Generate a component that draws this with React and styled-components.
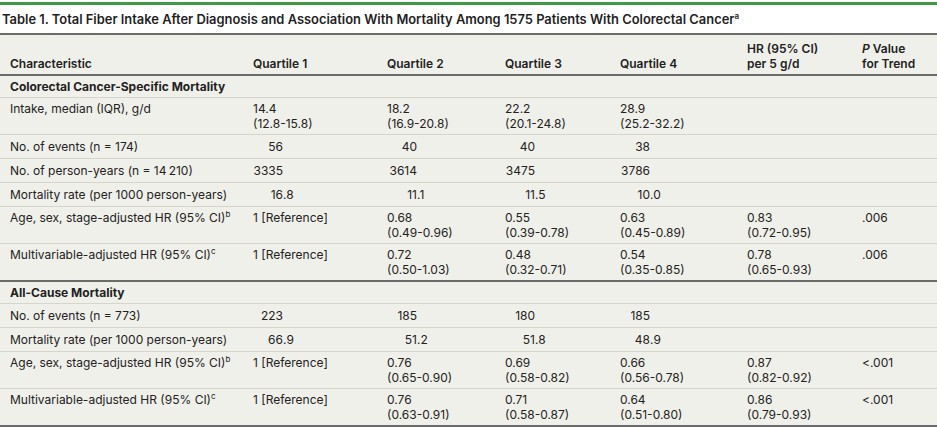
import React from "react";
import styled, { createGlobalStyle } from "styled-components";

const GlobalStyle = createGlobalStyle`
  body {
    margin: 0;
    background: #ffffff;
    font-family: Inter, "Open Sans", "Liberation Sans", sans-serif;
    color: #222222;
  }
`;

const Wrapper = styled.div`
  width: 937px;
  border-top: 3px solid #3f9a45;
  margin-top: 2px;
`;

const Caption = styled.div`
  font-size: 12.9px;
  font-weight: 600;
  line-height: 16px;
  padding: 7px 2px 5px;
  border-bottom: 2px solid #6b6b6b;
  color: #1f1f1f;
  white-space: nowrap;
`;

const Table = styled.table`
  width: 100%;
  border-collapse: collapse;
  table-layout: fixed;
  background: #f0f0ea;
  font-size: 12px;
  line-height: 15px;
`;

const Th = styled.th`
  text-align: left;
  vertical-align: bottom;
  font-weight: 600;
  padding: 6px 10px 3px;
  border-bottom: 2px solid #6b6b6b;
`;

const Td = styled.td`
  vertical-align: top;
  padding: ${(p) => (p.$single ? "4px 10px 4px" : "3px 10px 3px")};
  font-weight: ${(p) => (p.$section ? 700 : 400)};
  border-bottom: ${(p) => (p.$last ? "2px solid #6b6b6b" : "1px solid #d5d5cc")};
  white-space: nowrap;
`;

const IntPart = styled.span`
  display: inline-block;
  width: 30px;
  text-align: right;
`;

const Sup = styled.sup`
  font-size: 8px;
  line-height: 0;
  vertical-align: 5px;
`;

const Line = styled.div``;

function Aligned({ value }) {
  const [int, frac] = value.split(".");
  return (
    <>
      <IntPart>{int}</IntPart>
      {frac !== undefined ? "." + frac : ""}
    </>
  );
}

function Cell({ v, last, single }) {
  if (!v) return <Td $last={last} $single={single} />;
  if (Array.isArray(v)) {
    return (
      <Td $last={last} $single={single}>
        {v.map((l, i) => (
          <Line key={i}>{l}</Line>
        ))}
      </Td>
    );
  }
  if (v.startsWith("1 [")) {
    return (
      <Td $last={last} $single={single}>
        {v}
      </Td>
    );
  }
  return (
    <Td $last={last} $single={single}>
      <Aligned value={v} />
    </Td>
  );
}

const sections = [
  {
    title: "Colorectal Cancer-Specific Mortality",
    rows: [
      {
        label: "Intake, median (IQR), g/d",
        cells: [
          ["14.4", "(12.8-15.8)"],
          ["18.2", "(16.9-20.8)"],
          ["22.2", "(20.1-24.8)"],
          ["28.9", "(25.2-32.2)"],
          null,
          null,
        ],
      },
      { label: "No. of events (n = 174)", cells: ["56", "40", "40", "38", null, null] },
      {
        label: "No. of person-years (n = 14\u202f210)",
        cells: ["3335", "3614", "3475", "3786", null, null],
      },
      {
        label: "Mortality rate (per 1000 person-years)",
        cells: ["16.8", "11.1", "11.5", "10.0", null, null],
      },
      {
        label: "Age, sex, stage-adjusted HR (95% CI)",
        sup: "b",
        cells: [
          "1 [Reference]",
          ["0.68", "(0.49-0.96)"],
          ["0.55", "(0.39-0.78)"],
          ["0.63", "(0.45-0.89)"],
          ["0.83", "(0.72-0.95)"],
          [".006"],
        ],
      },
      {
        label: "Multivariable-adjusted HR (95% CI)",
        sup: "c",
        cells: [
          "1 [Reference]",
          ["0.72", "(0.50-1.03)"],
          ["0.48", "(0.32-0.71)"],
          ["0.54", "(0.35-0.85)"],
          ["0.78", "(0.65-0.93)"],
          [".006"],
        ],
      },
    ],
  },
  {
    title: "All-Cause Mortality",
    rows: [
      { label: "No. of events (n = 773)", cells: ["223", "185", "180", "185", null, null] },
      {
        label: "Mortality rate (per 1000 person-years)",
        cells: ["66.9", "51.2", "51.8", "48.9", null, null],
      },
      {
        label: "Age, sex, stage-adjusted HR (95% CI)",
        sup: "b",
        cells: [
          "1 [Reference]",
          ["0.76", "(0.65-0.90)"],
          ["0.69", "(0.58-0.82)"],
          ["0.66", "(0.56-0.78)"],
          ["0.87", "(0.82-0.92)"],
          ["<.001"],
        ],
      },
      {
        label: "Multivariable-adjusted HR (95% CI)",
        sup: "c",
        cells: [
          "1 [Reference]",
          ["0.76", "(0.63-0.91)"],
          ["0.71", "(0.58-0.87)"],
          ["0.64", "(0.51-0.80)"],
          ["0.86", "(0.79-0.93)"],
          ["<.001"],
        ],
      },
    ],
  },
];

export default function App() {
  return (
    <Wrapper>
      <GlobalStyle />
      <Caption>
        Table 1. Total Fiber Intake After Diagnosis and Association With Mortality Among 1575
        Patients With Colorectal Cancer<Sup>a</Sup>
      </Caption>
      <Table>
        <colgroup>
          <col style={{ width: 243 }} />
          <col style={{ width: 134 }} />
          <col style={{ width: 118 }} />
          <col style={{ width: 115 }} />
          <col style={{ width: 127 }} />
          <col style={{ width: 115 }} />
          <col />
        </colgroup>
        <thead>
          <tr>
            <Th>Characteristic</Th>
            <Th>Quartile 1</Th>
            <Th>Quartile 2</Th>
            <Th>Quartile 3</Th>
            <Th>Quartile 4</Th>
            <Th>
              HR (95% CI)
              <br />
              per 5 g/d
            </Th>
            <Th>
              <i>P</i> Value
              <br />
              for Trend
            </Th>
          </tr>
        </thead>
        <tbody>
          {sections.map((s) => (
            <React.Fragment key={s.title}>
              <tr>
                <Td $section colSpan={7}>
                  {s.title}
                </Td>
              </tr>
              {s.rows.map((r, i) => {
                const last = i === s.rows.length - 1;
                const single = !r.cells.some(Array.isArray);
                return (
                  <tr key={r.label}>
                    <Td $last={last} $single={single}>
                      {r.label}
                      {r.sup && <Sup>{r.sup}</Sup>}
                    </Td>
                    {r.cells.map((c, j) => (
                      <Cell key={j} v={c} last={last} single={single} />
                    ))}
                  </tr>
                );
              })}
            </React.Fragment>
          ))}
        </tbody>
      </Table>
    </Wrapper>
  );
}
